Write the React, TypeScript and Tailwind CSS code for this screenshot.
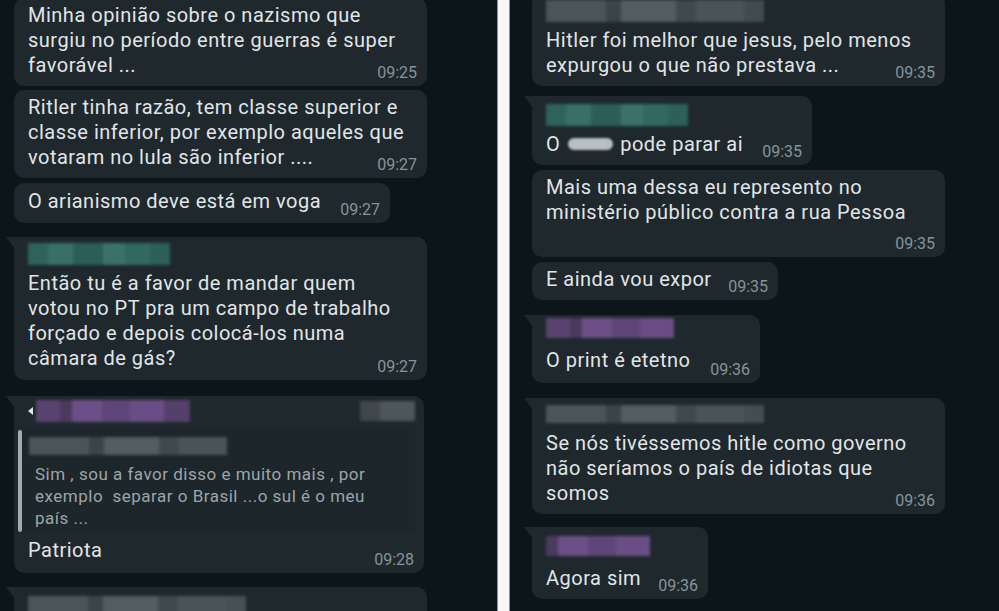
import type { ReactNode } from "react"

type Seg = { w: number; c: string; o?: number }

function Blur({ segs, className = "" }: { segs: Seg[]; className?: string }) {
  return (
    <div className={"flex blur-[1.5px] " + className}>
      {segs.map((s, i) => (
        <div key={i} className="h-full" style={{ width: s.w, background: s.c, opacity: s.o ?? 1 }} />
      ))}
    </div>
  )
}

function Bubble({
  className,
  time,
  tail,
  pad = true,
  children,
}: {
  className: string
  time?: string
  tail?: boolean
  pad?: boolean
  children: ReactNode
}) {
  return (
    <div
      className={
        "relative shrink-0 rounded-[10px] bg-[#1e282d] " +
        (pad ? "px-[14px] " : "") +
        (tail ? "rounded-tl-none " : "") +
        className
      }
    >
      {tail && (
        <div className="absolute -left-[8px] top-0 h-0 w-0 border-t-[12px] border-l-[9px] border-t-[#1e282d] border-l-transparent" />
      )}
      {children}
      {time && (
        <span className="absolute right-[10px] bottom-[5px] text-[16px] leading-none text-[#87949b]">
          {time}
        </span>
      )}
    </div>
  )
}

function Line({ children }: { children: ReactNode }) {
  return (
    <p className="whitespace-nowrap text-[20px] leading-[25px] tracking-[0.5px] text-[#e2e5e7]">{children}</p>
  )
}

function Quote({ children }: { children: ReactNode }) {
  return (
    <p className="whitespace-pre text-[17px] leading-[22px] tracking-[0.5px] text-[#9ea5a9]">{children}</p>
  )
}

const teal: Seg[] = [
  { w: 20, c: "#2f625d" },
  { w: 25, c: "#386f68" },
  { w: 30, c: "#2c5e59" },
  { w: 22, c: "#3a726b" },
  { w: 25, c: "#326862" },
  { w: 20, c: "#2d605b" },
]
const purple: Seg[] = [
  { w: 24, c: "#5a4270" },
  { w: 12, c: "#4a3a5e" },
  { w: 30, c: "#6c4f86" },
  { w: 28, c: "#5e4678" },
  { w: 34, c: "#6a4d84" },
  { w: 26, c: "#54406a" },
]
const gray: Seg[] = [
  { w: 60, c: "#4b5459" },
  { w: 15, c: "#3b4449" },
  { w: 55, c: "#535c61" },
  { w: 20, c: "#40494e" },
  { w: 48, c: "#4a5358" },
]

export default function App() {
  return (
    <div className="flex h-[611px] w-[999px] overflow-hidden bg-white font-['Roboto','Noto_Sans',sans-serif]">
      {/* left screenshot */}
      <div className="flex w-[497px] shrink-0 flex-col overflow-hidden bg-[#0c151a] pl-[14px]">
        <Bubble className="mt-[-2px] w-[413px] pt-[5px] pb-[8px]" time="09:25">
          <Line>Minha opinião sobre o nazismo que</Line>
          <Line>surgiu no período entre guerras é super</Line>
          <Line>favorável ...</Line>
        </Bubble>
        <Bubble className="mt-[4px] w-[413px] pt-[5px] pb-[8px]" time="09:27">
          <Line>Ritler tinha razão, tem classe superior e</Line>
          <Line>classe inferior, por exemplo aqueles que</Line>
          <Line>votaram no lula são inferior ....</Line>
        </Bubble>
        <Bubble className="mt-[5px] w-[376px] pt-[6px] pb-[9px]" time="09:27">
          <Line>O arianismo deve está em voga</Line>
        </Bubble>
        <Bubble className="mt-[14px] w-[413px] pt-[6px] pb-[9px]" time="09:27" tail>
          <Blur segs={teal} className="mb-[6px] h-[22px]" />
          <Line>Então tu é a favor de mandar quem</Line>
          <Line>votou no PT pra um campo de trabalho</Line>
          <Line>forçado e depois colocá-los numa</Line>
          <Line>câmara de gás?</Line>
        </Bubble>
        <Bubble className="mt-[16px] w-[410px] pt-[4px] pb-[10px]" time="09:28" tail pad={false}>
          <div className="flex h-[22px] items-center justify-between pl-[14px] pr-[9px]">
            <div className="flex h-full items-center gap-[3px]">
              <div className="h-0 w-0 border-y-[4px] border-r-[5px] border-y-transparent border-r-[#e6e6e6]" />
              <Blur segs={purple} className="h-full" />
            </div>
            <Blur segs={[{ w: 20, c: "#3f474c" }, { w: 35, c: "#4d565b" }]} className="h-[20px]" />
          </div>
          <div className="mt-[8px] ml-[4px] mr-[9px] flex rounded-[6px] bg-[#1c262b]">
            <div className="w-[4px] shrink-0 rounded-full bg-[#a3abaf]" />
            <div className="pt-[7px] pb-[3px] pl-[13px]">
              <Blur segs={gray} className="mb-[8px] ml-[-6px] h-[18px]" />
              <Quote>Sim , sou a favor disso e muito mais , por</Quote>
              <Quote>exemplo  separar o Brasil ...o sul é o meu</Quote>
              <Quote>país ...</Quote>
            </div>
          </div>
          <div className="mt-[6px] pl-[14px]">
            <Line>Patriota</Line>
          </div>
        </Bubble>
        <Bubble className="mt-[14px] h-[40px] w-[413px] pt-[9px]" tail>
          <Blur segs={gray.concat([{ w: 20, c: "#465055" }])} className="h-[20px]" />
        </Bubble>
      </div>

      {/* divider */}
      <div className="w-[13px] shrink-0 border-x border-[#8f9396] bg-[#f7f7f7]" />

      {/* right screenshot */}
      <div className="flex flex-1 flex-col overflow-hidden bg-[#0c151a] pl-[22px]">
        <Bubble className="mt-[-6px] w-[413px] pt-[6px] pb-[8px]" time="09:35">
          <Blur segs={gray.concat([{ w: 20, c: "#424b50" }])} className="mb-[6px] h-[22px]" />
          <Line>Hitler foi melhor que jesus, pelo menos</Line>
          <Line>expurgou o que não prestava ...</Line>
        </Bubble>
        <Bubble className="mt-[10px] w-[280px] pt-[8px] pb-[8px]" time="09:35" tail>
          <Blur segs={teal} className="mb-[6px] h-[22px]" />
          <Line>
            O{" "}
            <span className="mx-[2px] inline-block h-[12px] w-[45px] rounded-full bg-[#b9bec1] align-[1px] blur-[1px]" />{" "}
            pode parar ai
          </Line>
        </Bubble>
        <Bubble className="mt-[5px] w-[413px] pt-[5px] pb-[32px]" time="09:35">
          <Line>Mais uma dessa eu represento no</Line>
          <Line>ministério público contra a rua Pessoa</Line>
        </Bubble>
        <Bubble className="mt-[5px] w-[246px] pt-[5px] pb-[8px]" time="09:35">
          <Line>E ainda vou expor</Line>
        </Bubble>
        <Bubble className="mt-[15px] w-[228px] pt-[3px] pb-[10px]" time="09:36" tail>
          <Blur segs={purple.slice(0, 5)} className="mb-[10px] h-[20px]" />
          <Line>O print é etetno</Line>
        </Bubble>
        <Bubble className="mt-[15px] w-[413px] pt-[7px] pb-[8px]" time="09:36" tail>
          <Blur segs={gray.concat([{ w: 20, c: "#444d52" }])} className="mb-[8px] h-[18px]" />
          <Line>Se nós tivéssemos hitle como governo</Line>
          <Line>não seríamos o país de idiotas que</Line>
          <Line>somos</Line>
        </Bubble>
        <Bubble className="mt-[13px] w-[176px] pt-[9px] pb-[8px]" time="09:36" tail>
          <Blur segs={purple.slice(1, 5)} className="mb-[10px] h-[20px]" />
          <Line>Agora sim</Line>
        </Bubble>
      </div>
    </div>
  )
}
